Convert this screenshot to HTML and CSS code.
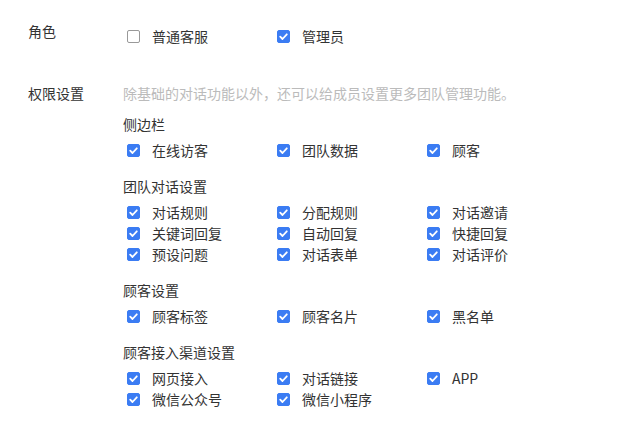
FILE: index.html
```html
<!DOCTYPE html>
<html lang="zh-CN">
<head>
    <meta charset="UTF-8" />
    <title>成员权限</title>
    <link rel="stylesheet" href="styles.css">
</head>
<body>
    <div class="form">
        <div class="form-row role-row">
            <div class="form-label">角色</div>
            <div class="form-body">
                <div class="options">
                    <label class="opt"><span class="box"></span>普通客服</label>
                    <label class="opt"><span class="box on"><svg viewBox="0 0 13 13"><path d="M3.2 6.7 5.5 9 9.8 4.3"/></svg></span>管理员</label>
                </div>
            </div>
        </div>

        <div class="form-row perm-row">
            <div class="form-label">权限设置</div>
            <div class="form-body">
                <div class="desc">除基础的对话功能以外，还可以给成员设置更多团队管理功能。</div>

                <div class="group">
                    <div class="group-title">侧边栏</div>
                    <div class="options">
                        <label class="opt"><span class="box on"><svg viewBox="0 0 13 13"><path d="M3.2 6.7 5.5 9 9.8 4.3"/></svg></span>在线访客</label>
                        <label class="opt"><span class="box on"><svg viewBox="0 0 13 13"><path d="M3.2 6.7 5.5 9 9.8 4.3"/></svg></span>团队数据</label>
                        <label class="opt"><span class="box on"><svg viewBox="0 0 13 13"><path d="M3.2 6.7 5.5 9 9.8 4.3"/></svg></span>顾客</label>
                    </div>
                </div>

                <div class="group">
                    <div class="group-title">团队对话设置</div>
                    <div class="options">
                        <label class="opt"><span class="box on"><svg viewBox="0 0 13 13"><path d="M3.2 6.7 5.5 9 9.8 4.3"/></svg></span>对话规则</label>
                        <label class="opt"><span class="box on"><svg viewBox="0 0 13 13"><path d="M3.2 6.7 5.5 9 9.8 4.3"/></svg></span>分配规则</label>
                        <label class="opt"><span class="box on"><svg viewBox="0 0 13 13"><path d="M3.2 6.7 5.5 9 9.8 4.3"/></svg></span>对话邀请</label>
                        <label class="opt"><span class="box on"><svg viewBox="0 0 13 13"><path d="M3.2 6.7 5.5 9 9.8 4.3"/></svg></span>关键词回复</label>
                        <label class="opt"><span class="box on"><svg viewBox="0 0 13 13"><path d="M3.2 6.7 5.5 9 9.8 4.3"/></svg></span>自动回复</label>
                        <label class="opt"><span class="box on"><svg viewBox="0 0 13 13"><path d="M3.2 6.7 5.5 9 9.8 4.3"/></svg></span>快捷回复</label>
                        <label class="opt"><span class="box on"><svg viewBox="0 0 13 13"><path d="M3.2 6.7 5.5 9 9.8 4.3"/></svg></span>预设问题</label>
                        <label class="opt"><span class="box on"><svg viewBox="0 0 13 13"><path d="M3.2 6.7 5.5 9 9.8 4.3"/></svg></span>对话表单</label>
                        <label class="opt"><span class="box on"><svg viewBox="0 0 13 13"><path d="M3.2 6.7 5.5 9 9.8 4.3"/></svg></span>对话评价</label>
                    </div>
                </div>

                <div class="group">
                    <div class="group-title">顾客设置</div>
                    <div class="options">
                        <label class="opt"><span class="box on"><svg viewBox="0 0 13 13"><path d="M3.2 6.7 5.5 9 9.8 4.3"/></svg></span>顾客标签</label>
                        <label class="opt"><span class="box on"><svg viewBox="0 0 13 13"><path d="M3.2 6.7 5.5 9 9.8 4.3"/></svg></span>顾客名片</label>
                        <label class="opt"><span class="box on"><svg viewBox="0 0 13 13"><path d="M3.2 6.7 5.5 9 9.8 4.3"/></svg></span>黑名单</label>
                    </div>
                </div>

                <div class="group">
                    <div class="group-title">顾客接入渠道设置</div>
                    <div class="options">
                        <label class="opt"><span class="box on"><svg viewBox="0 0 13 13"><path d="M3.2 6.7 5.5 9 9.8 4.3"/></svg></span>网页接入</label>
                        <label class="opt"><span class="box on"><svg viewBox="0 0 13 13"><path d="M3.2 6.7 5.5 9 9.8 4.3"/></svg></span>对话链接</label>
                        <label class="opt"><span class="box on"><svg viewBox="0 0 13 13"><path d="M3.2 6.7 5.5 9 9.8 4.3"/></svg></span>APP</label>
                        <label class="opt"><span class="box on"><svg viewBox="0 0 13 13"><path d="M3.2 6.7 5.5 9 9.8 4.3"/></svg></span>微信公众号</label>
                        <label class="opt"><span class="box on"><svg viewBox="0 0 13 13"><path d="M3.2 6.7 5.5 9 9.8 4.3"/></svg></span>微信小程序</label>
                    </div>
                </div>
            </div>
        </div>
    </div>
</body>
</html>
```

FILE: styles.css
```css
body {
    margin: 0;
    background: #fff;
    font-family: "Noto Sans CJK SC", "Noto Sans", sans-serif;
    font-size: 14px;
    color: #333;
}
.form {
    padding: 21px 0 0 28px;
}
.form-row {
    display: flex;
}
.form-label {
    width: 95px;
    line-height: 20px;
    color: #333;
}
.form-body {
    flex: 1;
}
.role-row .options {
    margin-top: 5px;
}
.perm-row {
    margin-top: 36px;
}
.desc {
    line-height: 20px;
    color: #bbb;
    margin-bottom: 11px;
}
.group + .group {
    margin-top: 15px;
}
.group-title {
    line-height: 20px;
    color: #333;
    margin-bottom: 6px;
}
.options {
    display: grid;
    grid-template-columns: repeat(3, 150px);
    padding-left: 4px;
}
.opt {
    display: flex;
    align-items: center;
    height: 21px;
    line-height: 21px;
    color: #333;
    cursor: pointer;
}
.box {
    width: 11px;
    height: 11px;
    border: 1px solid #999;
    border-radius: 2px;
    margin-right: 12px;
    display: flex;
    align-items: center;
    justify-content: center;
}
.box.on {
    background: #3b7cf3;
    border-color: #3b7cf3;
}
.box svg {
    width: 13px;
    height: 13px;
    flex: none;
}
.box svg path {
    fill: none;
    stroke: #fff;
    stroke-width: 1.8;
    stroke-linecap: round;
    stroke-linejoin: round;
}
```
